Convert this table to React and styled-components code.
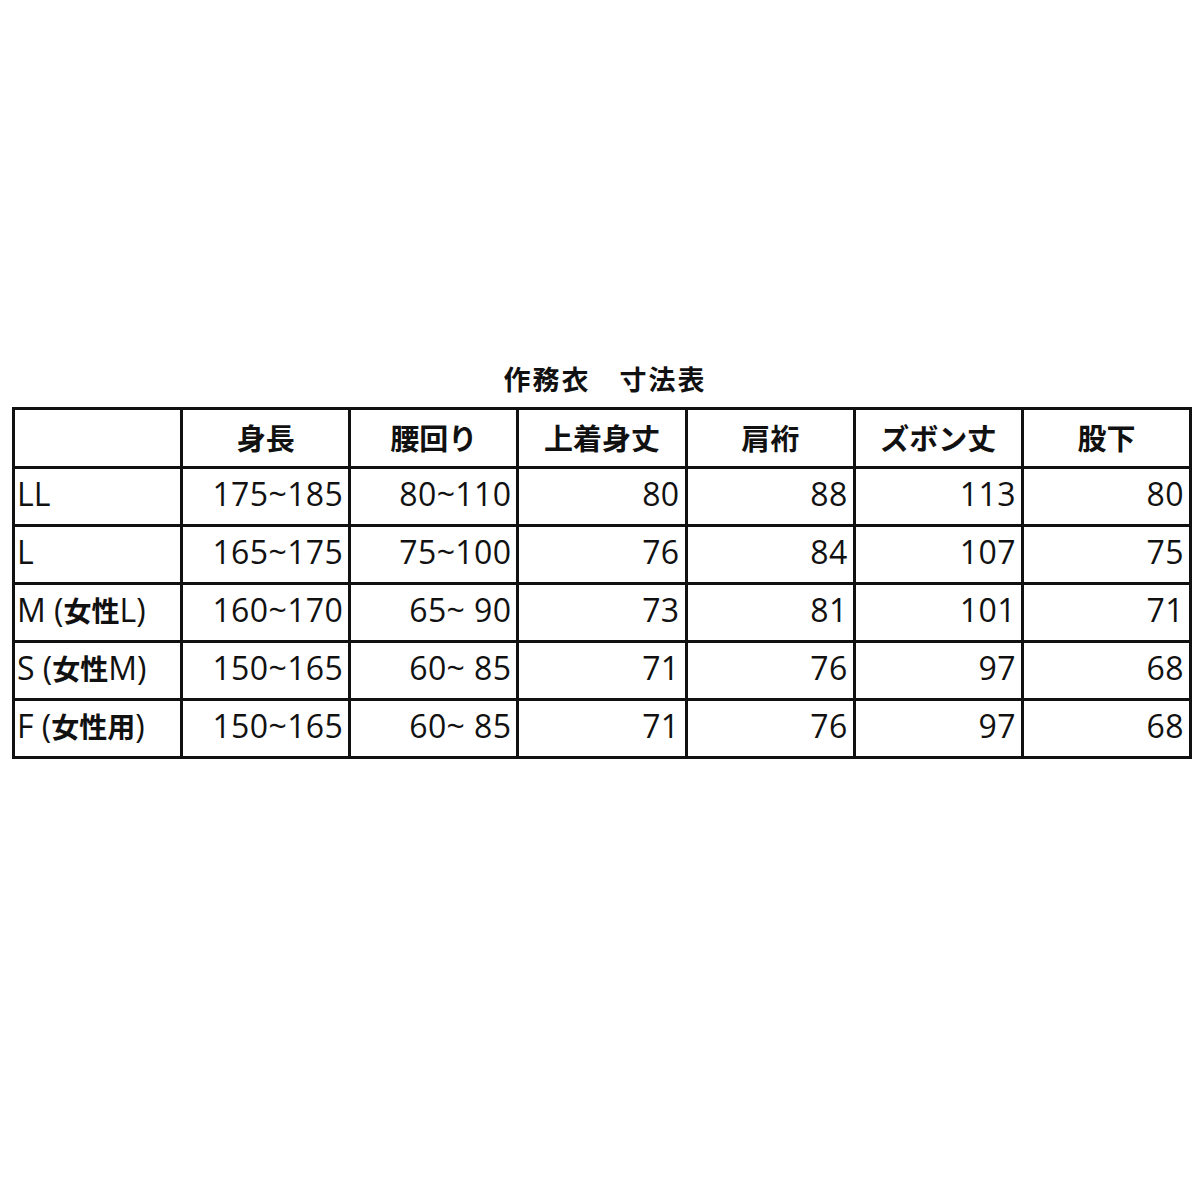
import React from 'react';
import styled, { createGlobalStyle } from 'styled-components';

const GlobalStyle = createGlobalStyle`
  html, body {
    margin: 0;
    padding: 0;
    background: #fff;
  }
  body {
    font-family: "Open Sans", "Noto Sans CJK JP", sans-serif;
    color: #111;
  }
`;

const headers = ['', '身長', '腰回り', '上着身丈', '肩裄', 'ズボン丈', '股下'];

// label: [latin prefix, CJK part, latin part, closing]
const rows = [
  [['LL'], '175~185', '80~110', '80', '88', '113', '80'],
  [['L'], '165~175', '75~100', '76', '84', '107', '75'],
  [['M (', '女性', 'L)'], '160~170', '65~ 90', '73', '81', '101', '71'],
  [['S (', '女性', 'M)'], '150~165', '60~ 85', '71', '76', '97', '68'],
  [['F (', '女性用', ')'], '150~165', '60~ 85', '71', '76', '97', '68'],
];

const Page = styled.main`
  width: 1200px;
  height: 1200px;
  box-sizing: border-box;
  padding: 361px 8px 0 12px;
`;

const Title = styled.h1`
  margin: 0 0 10px;
  text-align: center;
  font-family: "Noto Sans CJK JP", sans-serif;
  font-size: 27px;
  font-weight: 700;
  line-height: 36px;
  letter-spacing: 2px;
  white-space: pre;
  padding-left: 6px;
`;

const Table = styled.table`
  width: 1180px;
  border-collapse: collapse;
  table-layout: fixed;
  border: 3px solid #111;
`;

const HeadCell = styled.th`
  height: 54px;
  border: 3px solid #111;
  padding: 0 4px 2px;
  text-align: center;
  font-family: "Noto Sans CJK JP", sans-serif;
  font-size: 29px;
  font-weight: 700;
  line-height: 1;
`;

const Cell = styled.td`
  height: 49px;
  border: 3px solid #111;
  padding: 0 ${(p) => (p.$label ? '2px' : '5px')} 6px;
  text-align: ${(p) => (p.$label ? 'left' : 'right')};
  font-size: 32px;
  font-weight: 400;
  letter-spacing: ${(p) => (p.$label ? '0' : '0.4px')};
  white-space: pre;
  line-height: 1;
`;

const Kanji = styled.span`
  font-family: "Noto Sans CJK JP", sans-serif;
  font-size: 28px;
  font-weight: 700;
`;

const Label = ({ parts }) => (
  <>
    {parts.map((p, i) => (i === 1 ? <Kanji key={i}>{p}</Kanji> : p))}
  </>
);

const App = () => {
  return (
    <>
      <GlobalStyle />
      <Page>
        <Title>作務衣　寸法表</Title>
        <Table>
          <thead>
            <tr>
              {headers.map((h, i) => (
                <HeadCell key={i}>{h}</HeadCell>
              ))}
            </tr>
          </thead>
          <tbody>
            {rows.map((row) => (
              <tr key={row[0][0]}>
                {row.map((v, i) => (
                  <Cell key={i} $label={i === 0}>
                    {i === 0 ? <Label parts={v} /> : v}
                  </Cell>
                ))}
              </tr>
            ))}
          </tbody>
        </Table>
      </Page>
    </>
  );
};

export default App;
